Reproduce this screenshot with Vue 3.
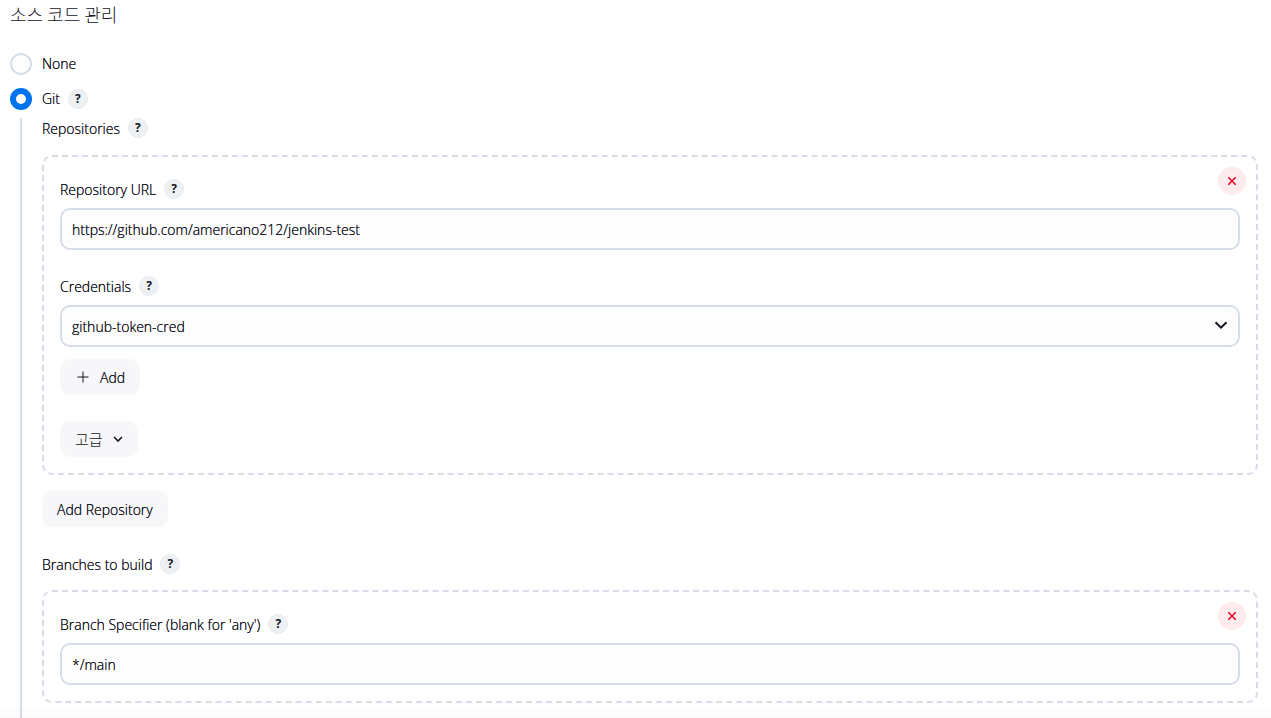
<script setup>
import { ref } from 'vue'

const scm = ref('git')
const repositoryUrl = ref('https://github.com/americano212/jenkins-test')
const credentials = ref('github-token-cred')
const branch = ref('*/main')
</script>

<template>
  <main class="page">
    <h2 class="title">소스 코드 관리</h2>

    <div class="option">
      <input id="scm-none" v-model="scm" class="radio" type="radio" name="scm" value="none" />
      <label for="scm-none">None</label>
    </div>
    <div class="option">
      <input id="scm-git" v-model="scm" class="radio" type="radio" name="scm" value="git" />
      <label for="scm-git">Git</label>
      <button class="help" type="button" aria-label="Git">?</button>
    </div>

    <div class="nested">
      <div class="heading">
        <span>Repositories</span>
        <button class="help" type="button" aria-label="Repositories">?</button>
      </div>
      <section class="chunk">
        <button class="remove" type="button" aria-label="Delete">
          <svg viewBox="0 0 10 10"><path d="M1.3 1.3 8.7 8.7M8.7 1.3 1.3 8.7" /></svg>
        </button>
        <div class="heading">
          <label for="url">Repository URL</label>
          <button class="help" type="button" aria-label="Repository URL">?</button>
        </div>
        <input id="url" v-model="repositoryUrl" class="field" type="text" />

        <div class="heading spaced">
          <label for="cred">Credentials</label>
          <button class="help" type="button" aria-label="Credentials">?</button>
        </div>
        <div class="select">
          <select id="cred" v-model="credentials" class="field">
            <option>github-token-cred</option>
          </select>
          <svg class="arrow" viewBox="0 0 14 8"><path d="M1.5 1.2 7 6.6 12.5 1.2" /></svg>
        </div>
        <button class="button add" type="button">
          <svg class="plus" viewBox="0 0 12 12"><path d="M6 .5V11.5M.5 6H11.5" /></svg>
          Add
        </button>
        <button class="button advanced" type="button">
          고급
          <svg class="chevron" viewBox="0 0 10 6"><path d="M1 1 5 5 9 1" /></svg>
        </button>
      </section>
      <button class="button" type="button">Add Repository</button>

      <div class="heading branches">
        <span>Branches to build</span>
        <button class="help" type="button" aria-label="Branches to build">?</button>
      </div>
      <section class="chunk">
        <button class="remove" type="button" aria-label="Delete">
          <svg viewBox="0 0 10 10"><path d="M1.3 1.3 8.7 8.7M8.7 1.3 1.3 8.7" /></svg>
        </button>
        <div class="heading">
          <label for="branch">Branch Specifier (blank for 'any')</label>
          <button class="help" type="button" aria-label="Branch Specifier">?</button>
        </div>
        <input id="branch" v-model="branch" class="field" type="text" />
      </section>
    </div>
    <div class="shade"></div>
  </main>
</template>

<style>
body {
  margin: 0;
  background: #fff;
}
</style>

<style scoped>
.page {
  position: relative;
  box-sizing: border-box;
  min-height: 100vh;
  padding: 4px 13px 0 10px;
  display: flex;
  flex-direction: column;
  color: #14141f;
  font: 300 14px/20px "Open Sans", "Noto Sans CJK KR", sans-serif;
  text-shadow: 0 0 0 currentColor;
}
.page * {
  box-sizing: border-box;
}
button,
input,
select {
  margin: 0;
  color: inherit;
  font: inherit;
  text-shadow: inherit;
}
button {
  border: 0;
  cursor: pointer;
}
svg {
  display: block;
  fill: none;
  stroke: currentColor;
}
.title {
  margin: 0 0 29px;
  font-family: "Noto Sans CJK KR", sans-serif;
  font-size: 18px;
  font-weight: 300;
  line-height: 20px;
  text-shadow: none;
}
.option {
  display: flex;
  align-items: center;
  height: 22px;
  margin-bottom: 13px;
}
.option + .option {
  margin-bottom: 8px;
}
.radio {
  appearance: none;
  width: 22px;
  height: 22px;
  margin-right: 10px;
  border: 2px solid #d7dde8;
  border-radius: 50%;
  background: #fdfdfd;
}
.radio:checked {
  border: 6px solid #0073ed;
  background: #fff;
}
.help {
  width: 20px;
  height: 20px;
  margin-left: 8px;
  padding: 0;
  border: 1px solid #e6ebef;
  border-radius: 50%;
  background: #eef1f4;
  font-size: 12px;
  font-weight: 700;
  line-height: 18px;
  text-shadow: none;
}
.nested {
  flex: 1;
  margin-left: 10px;
  padding: 0 0 14px 20px;
  border-left: 2px solid #d7dde8;
}
.heading {
  display: flex;
  height: 20px;
  line-height: 22px;
}
.chunk {
  position: relative;
  margin: 17px 0 16px;
  padding: 22px 16px 16px;
  border: 2px dashed #d7dde8;
  border-radius: 10px;
}
.branches + .chunk {
  margin: 16px 0 0;
}
.remove {
  position: absolute;
  top: 10px;
  right: 10px;
  display: grid;
  place-items: center;
  width: 28px;
  height: 28px;
  padding: 0;
  border-radius: 50%;
  background: #fdebed;
  color: #e6001f;
}
.remove svg {
  width: 10px;
  height: 10px;
  stroke-width: 1.5;
}
.field {
  display: block;
  appearance: none;
  width: 100%;
  height: 42px;
  margin-top: 9px;
  padding: 1px 10px 0;
  border: 2px solid #d7dde8;
  border-radius: 10px;
  background: #fdfdfd;
  outline: 0;
}
.spaced {
  margin-top: 26px;
}
.select {
  position: relative;
}
.arrow {
  position: absolute;
  top: 16px;
  right: 12px;
  width: 14px;
  height: 8px;
  stroke-width: 2;
  pointer-events: none;
}
.button {
  display: flex;
  align-items: center;
  height: 36px;
  padding: 2px 15px 0;
  border-radius: 10px;
  background: #f7f7f9;
}
.add {
  gap: 11px;
  margin-top: 12px;
  padding-left: 17px;
}
.advanced {
  gap: 10px;
  margin-top: 26px;
  padding: 0 15px;
  font-size: 15px;
  text-shadow: none;
}
.plus {
  width: 12px;
  height: 12px;
  margin-bottom: 2px;
}
.chevron {
  width: 10px;
  height: 6px;
  stroke-width: 1.6;
}
.branches {
  margin-top: 27px;
}
.shade {
  position: absolute;
  right: 0;
  bottom: 0;
  left: 0;
  height: 14px;
  background: linear-gradient(transparent, rgba(0, 0, 0, 0.02));
  pointer-events: none;
}
</style>
